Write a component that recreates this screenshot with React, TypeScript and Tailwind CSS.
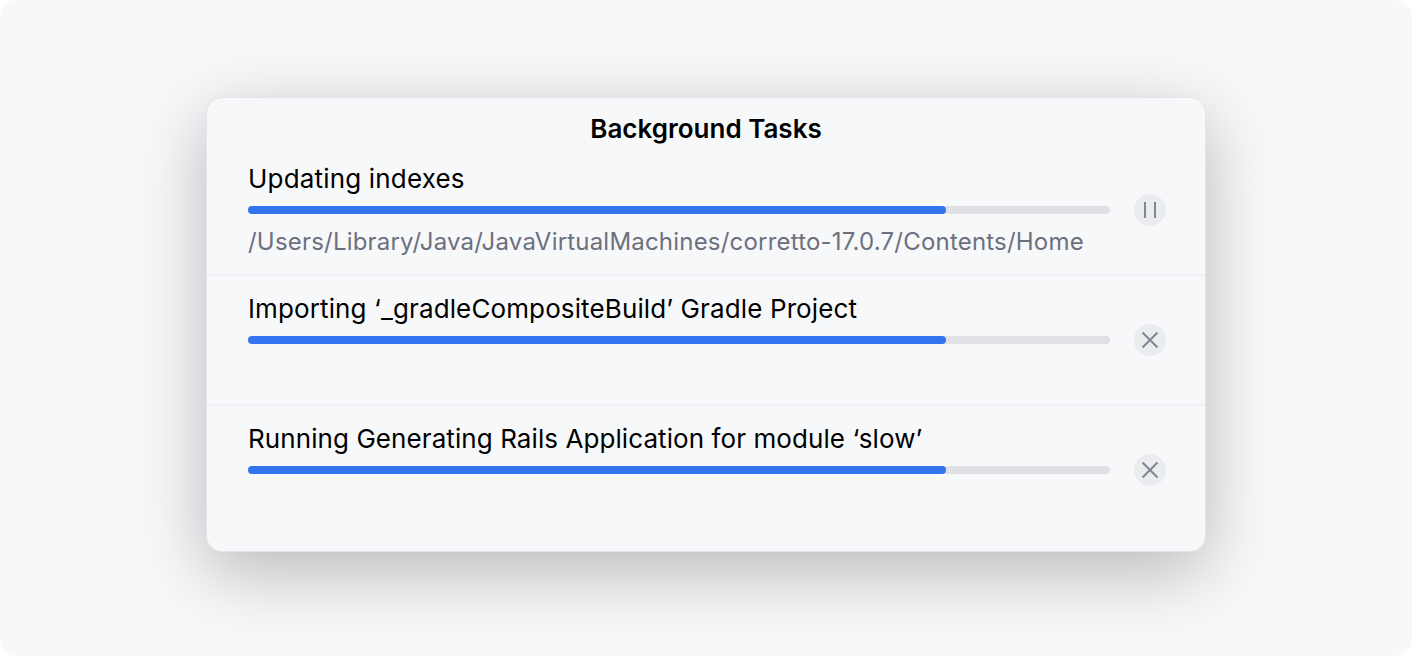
const Pause = () => (
  <svg width="32" height="32" viewBox="0 0 32 32" fill="none" stroke="#818594" strokeWidth="2">
    <path d="M11 8V24M21 8V24" />
  </svg>
);
const Close = () => (
  <svg width="32" height="32" viewBox="0 0 32 32" fill="none" stroke="#818594" strokeWidth="2">
    <path d="M8.5 8.5L23.5 23.5M23.5 8.5L8.5 23.5" />
  </svg>
);

function Row({ title, sub, icon, border, tracking }: { title: string; sub?: string; icon: React.ReactNode; border?: boolean; tracking: string }) {
  return (
    <div className={`h-[130px] pt-[17px] pl-[41px] pr-[39px] flex gap-[24px] ${border ? "border-b-2 border-[#eff0f3]" : ""}`}>
      <div className="flex-1 min-w-0">
        <div className={`h-[32px] leading-[32px] text-[26px] text-black whitespace-nowrap ${tracking}`}>{title}</div>
        <div className="mt-[11px] h-[8px] rounded-full bg-[#dfe1e5]">
          <div className="h-full w-[81%] rounded-full bg-[#3574f0]" />
        </div>
        {sub && <div className="mt-[12px] h-[32px] leading-[32px] text-[24px] tracking-[0.2px] text-[#6c707e] whitespace-nowrap">{sub}</div>}
      </div>
      <div className="mt-[31px] w-[32px] h-[32px] rounded-full bg-[#ebecf0] flex items-center justify-center shrink-0">{icon}</div>
    </div>
  );
}

export default function App() {
  return (
    <div className="w-[1412px] h-[656px] bg-white font-['Inter',sans-serif]">
      <div className="w-full h-full rounded-2xl bg-[#f7f8fa] flex justify-center pt-[97px]">
        <div className="w-[1000px] h-[455px] rounded-[16px] bg-[#f7f8fa] border border-[#e4e5e8] shadow-[0_20px_70px_rgba(0,0,0,0.26)] flex flex-col">
          <div className="h-[48px] pt-[15px] text-center text-[26px] leading-[32px] font-semibold text-black">Background Tasks</div>
          <Row title="Updating indexes" tracking="tracking-[0.18px]" sub="/Users/Library/Java/JavaVirtualMachines/corretto-17.0.7/Contents/Home" icon={<Pause />} border />
          <Row title="Importing ‘_gradleCompositeBuild’ Gradle Project" tracking="tracking-[0.12px]" icon={<Close />} border />
          <Row title="Running Generating Rails Application for module ‘slow’" tracking="tracking-[0.08px]" icon={<Close />} />
        </div>
      </div>
    </div>
  );
}
